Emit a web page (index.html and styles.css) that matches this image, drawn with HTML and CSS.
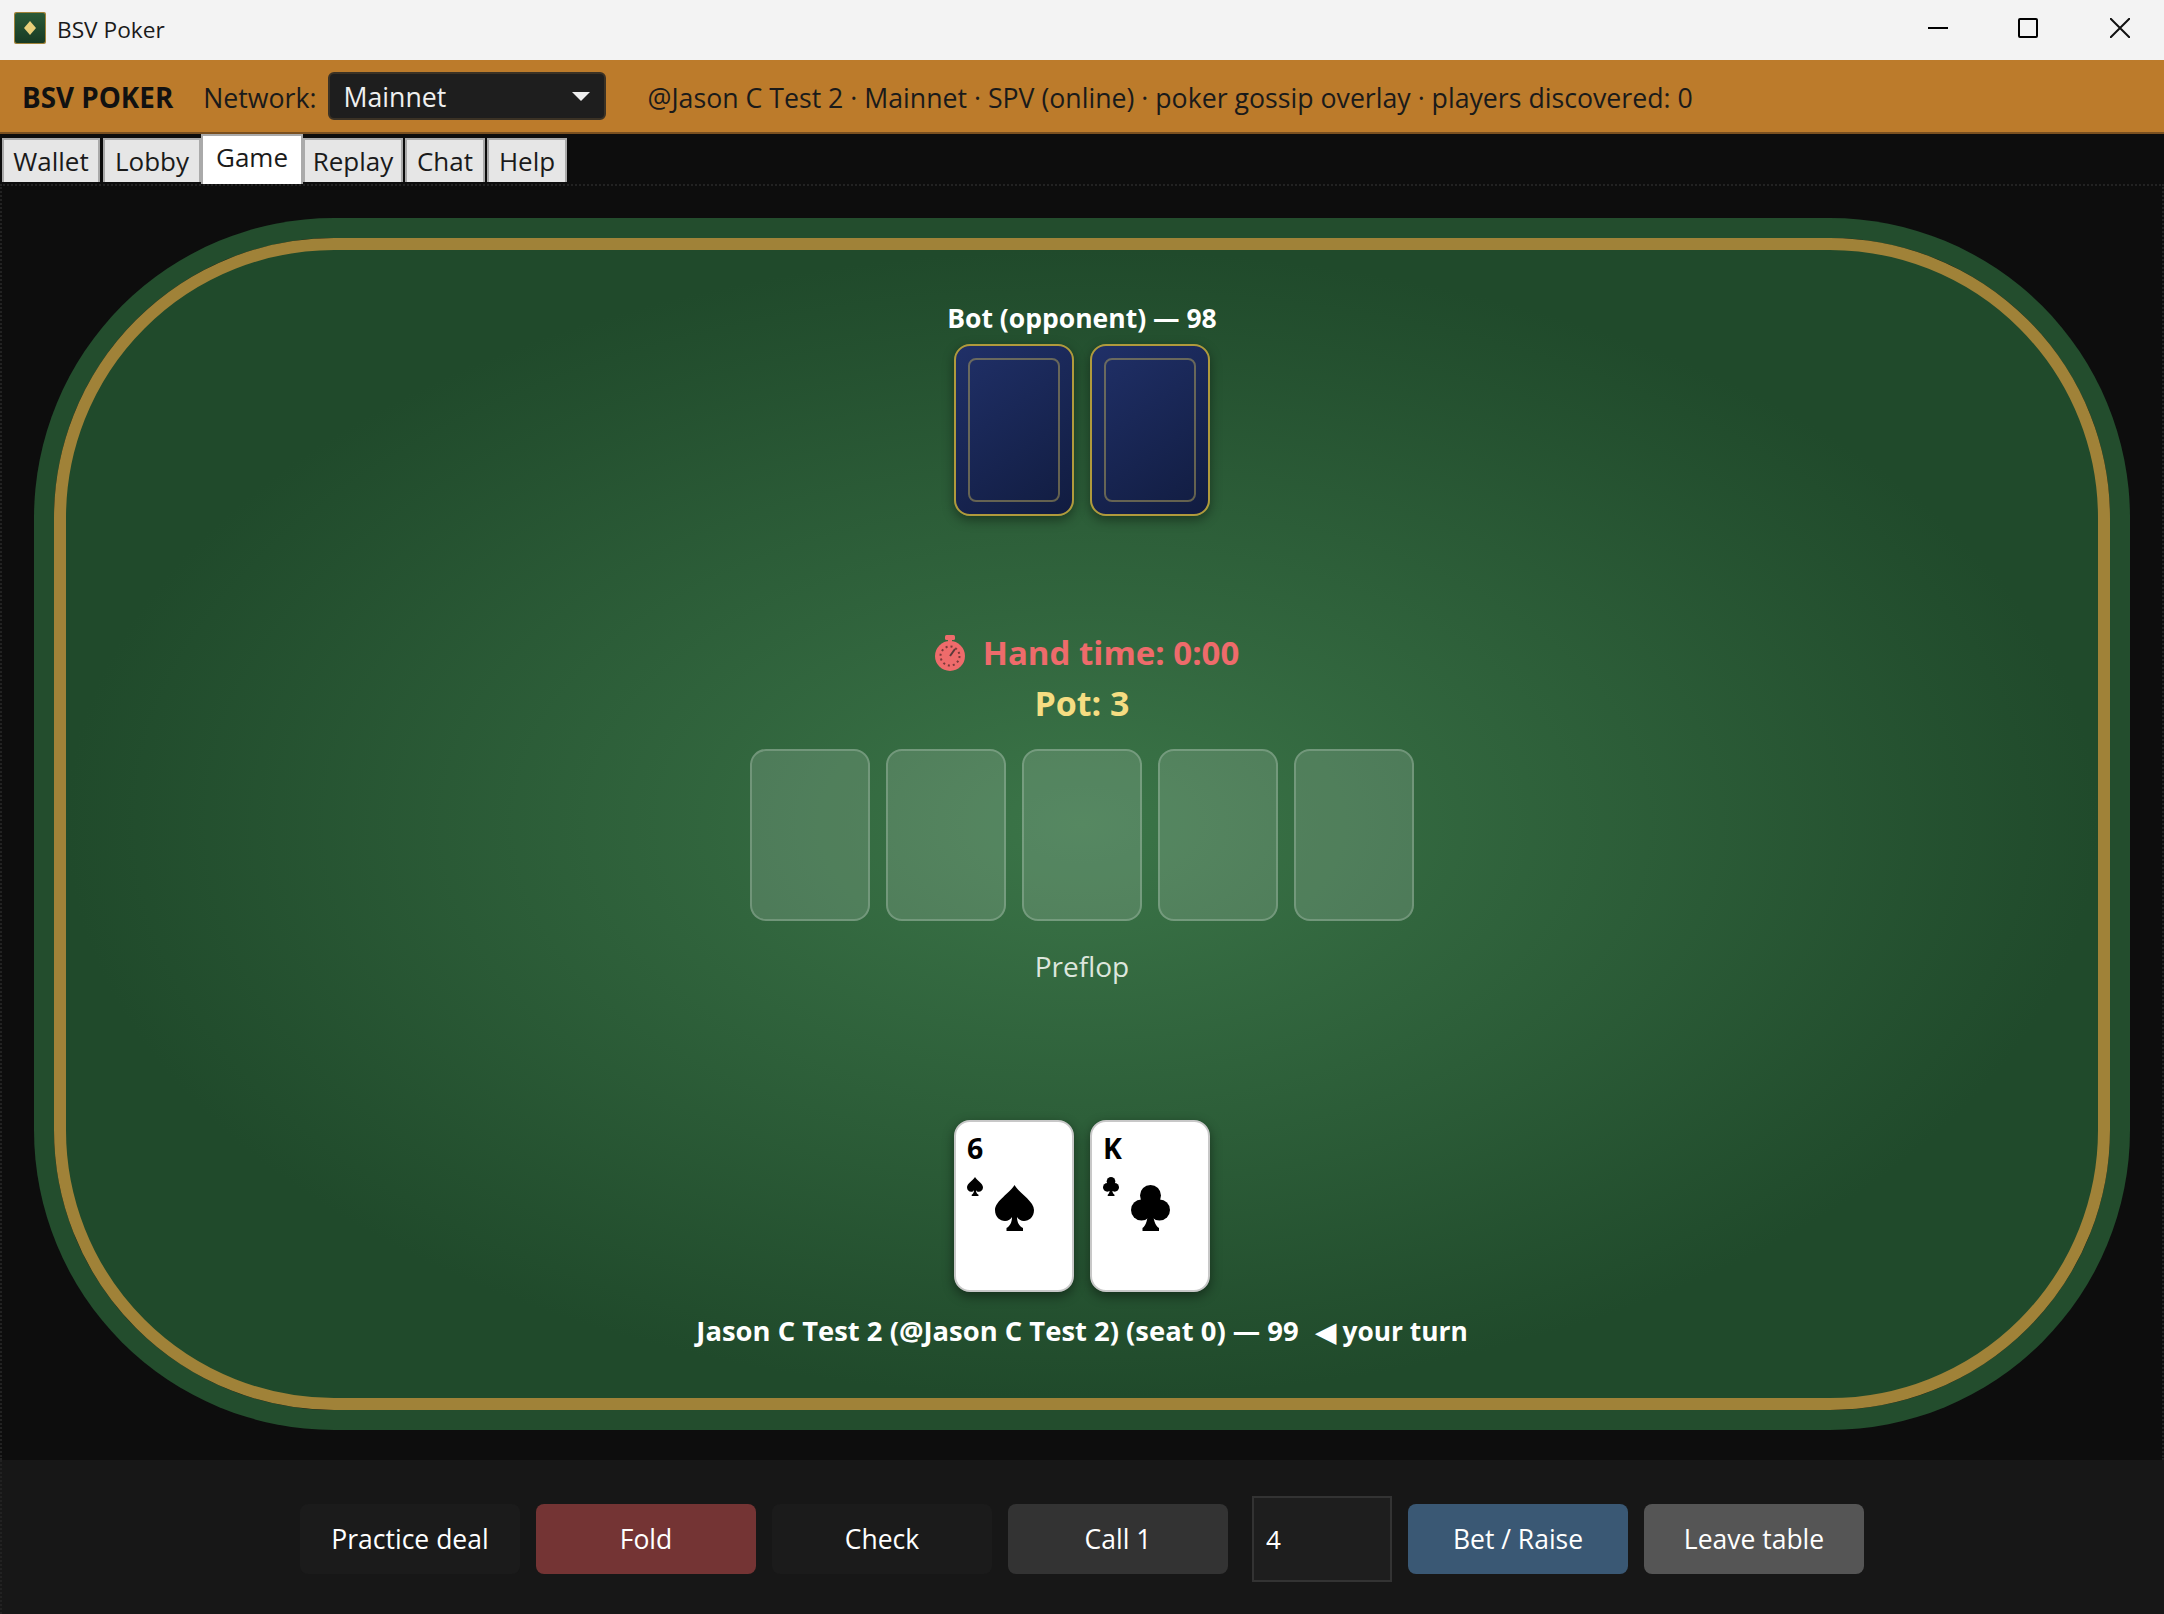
FILE: index.html
```html
<!DOCTYPE html>
<html lang="en" dir="ltr">
  <head>
    <meta charset="utf-8">
    <title>BSV Poker</title>
    <link rel="stylesheet" href="styles.css">
  </head>

  <body>
    <svg class="defs" width="0" height="0">
      <symbol id="spade" viewBox="0 0 39 46">
        <path d="M19.5 0C24 8 39 16 39 25C39 32 34 36 29 36C26 36 23 34 22 32C22 37 24 41 28 43V46H11.5V43C15 41 17 37 17 32C16 34 13 36 10 36C5 36 0 32 0 25C0 16 15 8 19.5 0Z"/>
      </symbol>
      <symbol id="club" viewBox="0 0 39 46">
        <circle cx="19.5" cy="10.5" r="10.5"/>
        <circle cx="10.5" cy="25" r="10.5"/>
        <circle cx="28.5" cy="25" r="10.5"/>
        <path d="M15 12H24V24H22C22 34 24 41 28 43V46H11.5V43C15 41 17 34 17 24H15Z"/>
      </symbol>
    </svg>

    <div class="titlebar">
      <svg class="appicon" viewBox="0 0 32 32">
        <defs>
          <linearGradient id="iconbg" x1="0" y1="0" x2="0" y2="1">
            <stop offset="0" stop-color="#2a5a37"/>
            <stop offset="1" stop-color="#173a24"/>
          </linearGradient>
        </defs>
        <rect width="32" height="32" rx="2" fill="#a08238"/>
        <rect x="1" y="1" width="30" height="30" rx="2" fill="url(#iconbg)"/>
        <path d="M16 9 L22 16 L16 23 L10 16 Z" fill="#e8cf7a"/>
      </svg>
      <span class="apptitle">BSV Poker</span>
      <div class="winbuttons">
        <svg class="winbtn" viewBox="0 0 20 20"><path d="M0 10H20" stroke="#000" stroke-width="2"/></svg>
        <svg class="winbtn" viewBox="0 0 20 20"><rect x="1" y="1" width="18" height="18" rx="1" fill="none" stroke="#000" stroke-width="2"/></svg>
        <svg class="winbtn" viewBox="0 0 20 20"><path d="M0 0L20 20M20 0L0 20" stroke="#111" stroke-width="2"/></svg>
      </div>
    </div>

    <div class="header">
      <span class="brand">BSV POKER</span>
      <span class="netlabel">Network:</span>
      <div class="netselect">
        <span>Mainnet</span>
        <span class="arrow"></span>
      </div>
      <span class="status">@Jason C Test 2 · Mainnet · SPV (online) · poker gossip overlay · players discovered: 0</span>
    </div>

    <div class="tabs">
      <div class="tab tab-wallet">Wallet</div>
      <div class="tab tab-lobby">Lobby</div>
      <div class="tab active">Game</div>
      <div class="tab tab-replay">Replay</div>
      <div class="tab tab-chat">Chat</div>
      <div class="tab tab-help">Help</div>
    </div>

    <div class="content">
      <div class="tablearea">
        <div class="felt">
          <div class="seat">
            <div class="seatname">Bot (opponent) — 98</div>
            <div class="cards">
              <div class="card back"><div class="backinner"></div></div>
              <div class="card back"><div class="backinner"></div></div>
            </div>
          </div>

          <div class="middle">
            <div class="handtime">
              <svg class="stopwatch" viewBox="0 0 30 36">
                <rect x="10" y="0" width="10" height="5" rx="1.5" fill="#ee6b6b"/>
                <rect x="13" y="4" width="4" height="4" fill="#ee6b6b"/>
                <circle cx="15" cy="21" r="15" fill="#ee6b6b"/>
                <circle cx="15" cy="21" r="9.5" fill="none" stroke="#7a3a3a" stroke-width="2" stroke-dasharray="2 3"/>
                <path d="M15 21L20 14" stroke="#5a3a3a" stroke-width="2"/>
              </svg>
              <span>Hand time: 0:00</span>
            </div>
            <div class="pot">Pot: 3</div>
            <div class="cards board">
              <div class="card empty"></div>
              <div class="card empty"></div>
              <div class="card empty"></div>
              <div class="card empty"></div>
              <div class="card empty"></div>
            </div>
            <div class="street">Preflop</div>
          </div>

          <div class="seat">
            <div class="cards">
              <div class="card face">
                <div class="corner">
                  <span class="rank">6</span>
                  <svg class="smallsuit"><use href="#spade"/></svg>
                </div>
                <svg class="bigsuit"><use href="#spade"/></svg>
              </div>
              <div class="card face">
                <div class="corner">
                  <span class="rank">K</span>
                  <svg class="smallsuit"><use href="#club"/></svg>
                </div>
                <svg class="bigsuit"><use href="#club"/></svg>
              </div>
            </div>
            <div class="seatname you">Jason C Test 2 (@Jason C Test 2) (seat 0) — 99<span class="turn">◀ your turn</span></div>
          </div>
        </div>
      </div>

      <div class="actions">
        <button type="button" class="action">Practice deal</button>
        <button type="button" class="action fold">Fold</button>
        <button type="button" class="action">Check</button>
        <button type="button" class="action call">Call 1</button>
        <input class="betamount" type="text" value="4">
        <button type="button" class="action bet">Bet / Raise</button>
        <button type="button" class="action leave">Leave table</button>
      </div>
    </div>
  </body>
</html>
```
FILE: styles.css
```css
*{
  padding: 0px;
  margin: 0px;
  box-sizing: border-box;
}

:root{
  --gold: #a08238;
  --rail: #234d2d;
  --ui: "Open Sans", "Noto Sans", sans-serif;
}

html, body{
  height: 100%;
  overflow: hidden;
}

body{
  display: flex;
  flex-direction: column;
  background-color: #0d0d0d;
  font-family: var(--ui);
}

.defs{
  display: block;
  height: 0;
}

.titlebar{
  height: 60px;
  flex: none;
  display: flex;
  align-items: center;
  background-color: #f3f3f3;
  padding-left: 14px;
}

.appicon{
  width: 32px;
  height: 32px;
  margin-top: -4px;
}

.apptitle{
  margin-left: 11px;
  font-size: 22.7px;
  color: #1a1a1a;
  margin-top: -2px;
}

.winbuttons{
  margin-left: auto;
  margin-right: 34px;
  margin-top: -4px;
  display: flex;
  gap: 70px;
}

.winbtn{
  width: 20px;
  height: 20px;
  display: block;
}

.winbtn:last-child{
  margin-left: 2px;
}

.header{
  height: 74px;
  flex: none;
  display: flex;
  align-items: center;
  background-color: #bc7b2b;
  border-bottom: 2px solid #7a5020;
  padding-left: 22px;
  color: #1a1a1a;
  font-size: 26.7px;
}

.brand{
  font-size: 27.8px;
  font-weight: 700;
  color: #111;
  margin-top: 2px;
}

.netlabel{
  margin-left: 30px;
  margin-top: 2px;
}

.netselect{
  margin-left: 11px;
  width: 278px;
  height: 48px;
  display: flex;
  align-items: center;
  justify-content: space-between;
  padding: 0 14px;
  background-color: #1e1e1e;
  border: 2px solid #3b3225;
  border-radius: 6px;
  color: #f0f0f0;
}

.arrow{
  width: 0;
  height: 0;
  border-left: 9px solid transparent;
  border-right: 9px solid transparent;
  border-top: 9px solid #eee;
}

.status{
  margin-left: 42px;
  margin-top: 2px;
}

.tabs{
  height: 50px;
  flex: none;
  display: flex;
  align-items: flex-end;
  padding: 0 0 2px 2px;
  background-color: #0d0d0d;
}

.tab{
  height: 44px;
  display: flex;
  align-items: center;
  justify-content: center;
  background-color: #e6e6e6;
  border: 2px solid #aaa;
  border-bottom: none;
  color: #1a1a1a;
  font-size: 26px;
}

.tab-wallet{
  width: 98px;
  margin-right: 3px;
}

.tab-lobby{
  width: 98px;
}

.tab.active{
  width: 102px;
  height: 50px;
  margin-bottom: -2px;
  padding-bottom: 6px;
  background-color: #fff;
}

.tab-replay{
  width: 100px;
  margin-right: 2px;
}

.tab-chat{
  width: 80px;
  margin-right: 2px;
}

.tab-help{
  width: 80px;
}

.content{
  flex: 1;
  display: flex;
  flex-direction: column;
  min-height: 0;
}

.tablearea{
  flex: 1;
  padding: 52px 52px 50px 52px;
  border: 2px dotted #222;
  border-bottom: none;
  min-height: 0;
  display: flex;
}

.felt{
  flex: 1;
  display: flex;
  flex-direction: column;
  align-items: center;
  justify-content: space-between;
  padding: 50px 0 49px 0;
  border: 12px solid var(--gold);
  border-radius: 280px;
  box-shadow: 0 0 0 20px var(--rail);
  background: radial-gradient(ellipse closest-side, #3b7548 0%, #204a2b 100%);
}

.seat{
  display: flex;
  flex-direction: column;
  align-items: center;
  gap: 8px;
}

.seatname{
  font-size: 26.5px;
  line-height: 36px;
  font-weight: 700;
  color: #fff;
}

.seatname.you{
  margin-top: 13px;
  font-size: 27.4px;
}

.turn{
  margin-left: 17px;
  font-size: 26.3px;
}

.cards{
  display: flex;
  gap: 16px;
}

.card{
  position: relative;
  width: 120px;
  height: 172px;
  border-radius: 16px;
}

.card.back{
  padding: 12px;
  border: 2px solid #b09a3c;
  background: linear-gradient(145deg, #203068, #111c40);
  box-shadow: 0 4px 12px rgba(0,0,0,0.4);
}

.backinner{
  height: 100%;
  border: 2px solid rgba(200,180,90,0.45);
  border-radius: 8px;
}

.card.empty{
  border: 2px solid rgba(255,255,255,0.2);
  background-color: rgba(255,255,255,0.14);
}

.card.face{
  display: flex;
  align-items: center;
  justify-content: center;
  background-color: #fff;
  border: 2px solid #c8c8c8;
  box-shadow: 0 4px 12px rgba(0,0,0,0.45);
  color: #000;
}

.corner{
  position: absolute;
  left: 11px;
  top: 8px;
  display: flex;
  flex-direction: column;
  align-items: flex-start;
}

.rank{
  font-size: 28.5px;
  line-height: 36px;
  font-weight: 700;
}

.smallsuit{
  width: 16px;
  height: 19px;
  margin-top: 11px;
  fill: #000;
}

.bigsuit{
  width: 39px;
  height: 46px;
  margin-top: 4px;
  fill: #000;
}

.middle{
  display: flex;
  flex-direction: column;
  align-items: center;
  margin-bottom: 21px;
}

.handtime{
  display: flex;
  align-items: center;
  gap: 18px;
  padding-left: 10px;
  font-size: 33px;
  line-height: 46px;
  font-weight: 700;
  color: #ee6b6b;
}

.stopwatch{
  width: 30px;
  height: 36px;
}

.pot{
  margin-top: 4px;
  font-size: 34px;
  line-height: 46px;
  font-weight: 700;
  color: #f5dd82;
}

.board{
  margin-top: 23px;
}

.street{
  margin-top: 25px;
  font-size: 28px;
  line-height: 40px;
  color: #dde6dd;
}

.actions{
  height: 154px;
  flex: none;
  display: flex;
  align-items: center;
  justify-content: center;
  gap: 16px;
  padding: 4px 2px 0 0;
  background-color: #171717;
  border-left: 2px dotted #222;
}

.action{
  width: 220px;
  height: 70px;
  border: none;
  border-radius: 8px;
  background-color: #1b1b1b;
  color: #fff;
  font-family: var(--ui);
  font-size: 26.5px;
}

.action.fold{
  background-color: #743434;
}

.action.call{
  background-color: #333;
}

.action.bet{
  background-color: #3a5874;
}

.action.leave{
  background-color: #555;
}

.betamount{
  width: 140px;
  height: 86px;
  margin-left: 8px;
  padding-left: 12px;
  border: 2px solid #333;
  background-color: #1e1e1e;
  color: #fff;
  font-family: var(--ui);
  font-size: 26px;
  outline: none;
}
```
